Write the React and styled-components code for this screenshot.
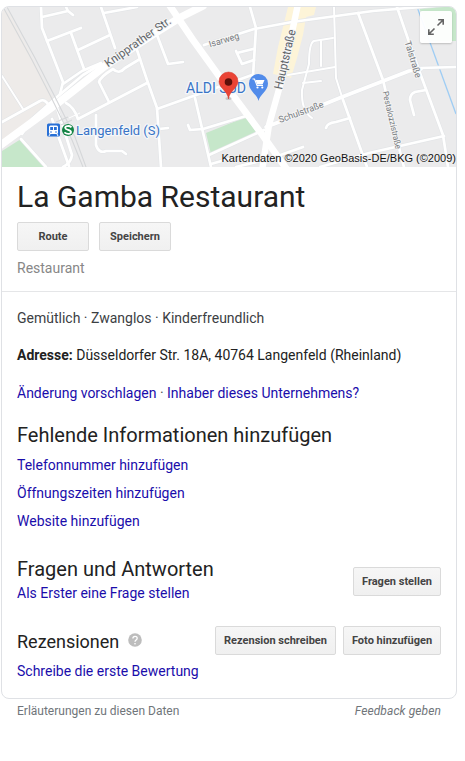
import React from 'react';
import styled, { createGlobalStyle } from 'styled-components';

const GlobalStyle = createGlobalStyle`
  * { box-sizing: border-box; }
  body { margin: 0; background: #fff; font-family: Roboto, "Liberation Sans", sans-serif; color: #222; }
`;

const Page = styled.main`
  width: 465px;
  height: 761px;
  padding: 6px 8px 0 1px;
  overflow: hidden;
`;

const Card = styled.article`
  height: 693px;
  border: 1px solid #dfe1e5;
  border-radius: 8px;
  overflow: hidden;
`;

const MapFrame = styled.div`
  position: relative;
  height: 160px;
`;

const MapDrawing = styled.svg`
  display: block;
  width: 100%;
  height: 160px;
`;

const ExpandButton = styled.button`
  position: absolute;
  top: 4px;
  right: 4px;
  width: 32px;
  height: 32px;
  padding: 0;
  border: 0;
  border-radius: 2px;
  background: rgba(255, 255, 255, 0.94);
  box-shadow: 0 1px 2px rgba(0, 0, 0, 0.2);

  svg { display: block; }
`;

const Header = styled.header`
  height: 125px;
  padding: 10px 15px 0;
  border-bottom: 1px solid #e5e6e8;
`;

const Title = styled.h1`
  margin: 0 0 5px;
  font-size: 30px;
  line-height: 40px;
  font-weight: 400;
  color: #222;
`;

const ButtonRow = styled.div`
  display: flex;
  gap: ${(p) => p.$gap}px;
`;

const Button = styled.button`
  width: ${(p) => p.$width}px;
  height: 29px;
  padding: 0;
  border: 1px solid #dadada;
  border-radius: 2px;
  background: linear-gradient(#f6f6f6, #f0f0f0);
  color: #444;
  font: 700 11px/27px Roboto, sans-serif;
  white-space: nowrap;
`;

const Category = styled.div`
  margin-top: 7px;
  font-size: 14px;
  line-height: 20px;
  color: #878787;
`;

const Body = styled.div`
  padding: 16px 15px 0;
`;

const Line = styled.p`
  margin: 0 0 ${(p) => p.$after || 0}px;
  font-size: 14px;
  line-height: 20px;
  white-space: nowrap;
  color: ${(p) => p.$color || '#222'};
`;

const Link = styled.a`
  color: #1a0dab;
  text-decoration: none;
`;

const Heading = styled.h2`
  margin: 0;
  font-size: ${(p) => p.$size || 20}px;
  line-height: 26px;
  font-weight: 400;
`;

const LinkList = styled.div`
  display: grid;
  gap: 8px;
  margin: 7px 0 25px;
`;

const Section = styled.section`
  display: flex;
  justify-content: space-between;
  align-items: flex-start;
  height: ${(p) => p.$height}px;
`;

const SectionText = styled.div`
  display: grid;
  gap: ${(p) => p.$gap}px;
  padding-top: ${(p) => p.$top || 0}px;
`;

const Actions = styled(ButtonRow)`
  padding-top: ${(p) => p.$top}px;
`;

const HeadingRow = styled.div`
  display: flex;
  align-items: flex-start;
  gap: 9px;

  svg { margin-top: 4px; }
`;

const Footer = styled.footer`
  display: flex;
  justify-content: space-between;
  padding: 4px 16px 0;
  font-size: 12px;
  line-height: 16px;
  color: #70757a;
`;

const Feedback = styled.em`
  letter-spacing: 0.1px;
`;

const minorRoads = [
  'M41 7 L42 28 L63 82 L60 94',
  'M42 17 L68 11 L66 7 M68 11 L73 15',
  'M47 41 L81 28',
  'M71 33 L84 69',
  'M101 7 L115 48',
  'M78 50 L110 35',
  'M104 13 L137 7',
  'M137 50 L147 80 L157 108 L161 167',
  'M2 122 L40 101 Q45 98 50 107',
  'M22 134 L32 119 L57 97 L83 75 L101 64',
  'M63 84 L82 71 L101 63',
  'M66 103 Q74 107 78 119',
  'M78 119 L147 83',
  'M109 102 L99 82 Q100 77 113 69 Q119 75 125 68 L140 59',
  'M96 115 L96 145 Q99 154 106 151 L122 151 L126 154',
  'M21 139 L46 167',
  'M57 108 L72 155 Q71 163 63 167',
  'M52 119 L69 166',
  'M157 109 L252 75',
  'M159 129 L168 128',
  'M195 98 L211 167',
  'M188 125 L190 130 L203 129 L246 116',
  'M157 35 L168 64 L183 62',
  'M250 7 L256 28 L253 76',
  'M204 45 L254 29 L292 22 L373 11 L456 4',
  'M236 51 L242 64 L254 60 M237 53 L253 49',
  'M209 155 L264 130 M211 164 L232 158',
  'M236 167 L272 158 L303 147',
  'M358 13 L383 80 L402 160 L404 167',
  'M397 7 L408 39 L420 73 L443 135 L448 167',
  'M420 68 L456 67',
  'M426 90 L415 92 Q410 94 410 100 L414 115',
  'M326 128 Q327 123 336 122 L350 118',
  'M320 167 L369 153 L444 136',
  'M342 97 L367 167',
];

const lanes = [
  'M2 76 L23 109',
  'M334 7 L336 78 L342 97',
  'M312 118 Q301 111 302 90 L309 64 Q309 43 314 41 L333 38',
  'M321 41 L321 66',
  'M288 75 L335 67',
  'M303 83 L321 81',
];

const schoolRoad = 'M266 127 L300 114 L342 97 L409 71 L421 69';

function Roads() {
  return (
    <g fill="none" strokeLinecap="round" strokeLinejoin="round">
      {minorRoads.map((d) => <path key={`edge${d}`} d={d} stroke="#e4e6e8" strokeWidth="4" />)}
      {lanes.map((d) => <path key={`edge${d}`} d={d} stroke="#e1e3e6" strokeWidth="3.2" />)}
      <path d={schoolRoad} stroke="#e3e5e8" strokeWidth="4.8" />
      {minorRoads.map((d) => <path key={d} d={d} stroke="#fff" strokeWidth="2.7" />)}
      {lanes.map((d) => <path key={d} d={d} stroke="#fff" strokeWidth="2" />)}
      <path d={schoolRoad} stroke="#fff" strokeWidth="3.6" />
      <path d="M-2 147 L58 103 L105 66 L152 35 L181 17 L203 6" stroke="#fff" strokeWidth="7.5" />
      <path d="M168 3 L193 40 L232 94 L261 133 L288 171" stroke="#fff" strokeWidth="6.8" />
      <path d="M298 4 L283 75 L269 125 L262 171" stroke="#fff" strokeWidth="6.4" />
    </g>
  );
}

function MapView() {
  return (
    <MapDrawing viewBox="2 7 454 160" preserveAspectRatio="none" fontFamily="Roboto, sans-serif">
      <rect x="2" y="7" width="454" height="160" fill="#ebebec" />
      <path d="M2 7 L10 14 L46 84 L57 105 L2 145Z" fill="#eeebe9" />
      <path d="M2 151 L21 139 L45 167 L2 167Z" fill="#c6e7ca" />
      <path d="M206 133 L246 117 L256 132 L211 154Z" fill="#c6e7ca" />
      <path d="M419 7 H456 V41 H431Z" fill="#c6e7ca" />
      <path d="M288 7 H316 L314 15 L306 17 L303 35 L297 58 L291 78 L273 74 L278 47Z" fill="#fdf4d8" />
      <path d="M416 4 L456 114" fill="none" stroke="#9fcdf4" strokeWidth="1.3" />
      <Roads />
      <g fill="none" stroke="#d5d7d9" strokeWidth="1.1">
        <path d="M3 7 L32 60 L51 97 L72 140 L83 167" />
        <path d="M7 7 L35 58 L54 95 L75 137 L86 167" />
        <path d="M56 122 L68 117 M61 125 L72 120" />
      </g>
      <path d="M69 118 L80 113 M73 108 L77 118" stroke="#fff" strokeWidth="1" />
      <g fill="#5f6468" stroke="#f4f4f4" strokeWidth="2" paintOrder="stroke" strokeLinejoin="round">
        <text transform="translate(108 67.5) rotate(-35)" fontSize="11.5" textLength="78" lengthAdjust="spacingAndGlyphs">Knipprather Str.</text>
        <text transform="translate(282 90) rotate(-77)" fontSize="12" textLength="61" lengthAdjust="spacingAndGlyphs">Hauptstraße</text>
        <g fill="#777b80">
          <text transform="translate(210 47.5) rotate(-17)" fontSize="9.2" textLength="31" lengthAdjust="spacingAndGlyphs">Isarweg</text>
          <text transform="translate(280 123) rotate(-20)" fontSize="9.2" textLength="47" lengthAdjust="spacingAndGlyphs">Schulstraße</text>
          <text transform="translate(404.5 42) rotate(73)" fontSize="9" textLength="38" lengthAdjust="spacingAndGlyphs">Talstraße</text>
          <text transform="translate(382.5 92) rotate(77)" fontSize="8.5" textLength="59" lengthAdjust="spacingAndGlyphs">Pestalozzistraße</text>
        </g>
      </g>
      <g fill="#3974c6" stroke="#f5f7fa" strokeWidth="2.5" paintOrder="stroke" strokeLinejoin="round" fontSize="13">
        <text x="76" y="135" textLength="84" lengthAdjust="spacingAndGlyphs">Langenfeld (S)</text>
        <text x="186" y="93" fontSize="14" textLength="60" lengthAdjust="spacingAndGlyphs">ALDI SÜD</text>
      </g>
      <rect x="47" y="123.5" width="13" height="13" rx="1.5" fill="#2870d6" />
      <path d="M50.5 125.5 H56.5 Q58 125.5 58 127 V132.5 Q58 134 56.5 134 H50.5 Q49 134 49 132.5 V127 Q49 125.5 50.5 125.5Z" fill="#fff" />
      <path d="M50.2 127 H53 V130 H50.2Z M54 127 H56.8 V130 H54Z" fill="#2870d6" />
      <circle cx="51" cy="132" r=".8" fill="#2870d6" />
      <circle cx="56" cy="132" r=".8" fill="#2870d6" />
      <path d="M50 134 L49 136 M57 134 L58 136" stroke="#fff" />
      <circle cx="68" cy="130" r="6" fill="#138444" />
      <path d="M71.5 127.2 C69 125.3 65 125.8 65.2 128 C65.4 130.3 71 129.5 71 132 C71 134.3 67 134.5 64.4 132.4" fill="none" stroke="#fff" strokeWidth="1.8" />
      <path d="M258.5 101 C257.5 95 249 91 249 83.5 A9.5 9.5 0 0 1 268 83.5 C268 91 259.5 95 258.5 101Z" fill="#518bea" />
      <path d="M252.5 79 H254.5 L257 85.5 H263" fill="none" stroke="#fff" strokeWidth="1.1" />
      <path d="M255.5 80 H264.5 L262.5 84.5 H257.2Z" fill="#fff" />
      <circle cx="257.5" cy="87.5" r="1.1" fill="#fff" />
      <circle cx="262.3" cy="87.5" r="1.1" fill="#fff" />
      <ellipse cx="228.5" cy="98.5" rx="3" ry="1.5" fill="#888" opacity=".35" />
      <path d="M228.5 99 C227.8 91 219 88 219 81.5 A9.5 9.5 0 0 1 238 81.5 C238 88 229.2 91 228.5 99Z" fill="#ea4335" stroke="#d33428" strokeWidth=".5" />
      <circle cx="228.5" cy="82" r="3.8" fill="#5e100a" />
      <text x="221.5" y="162" fontFamily="Liberation Sans, Arial, sans-serif" fontSize="11" fill="#111" stroke="#f2f2f2" strokeWidth="1" paintOrder="stroke" textLength="234.5">Kartendaten ©2020 GeoBasis-DE/BKG (©2009)</text>
    </MapDrawing>
  );
}

function ExpandIcon() {
  return (
    <svg width="32" height="32" viewBox="0 0 32 32" fill="none" stroke="#646464" strokeWidth="1.6">
      <path d="M17.5 14.5 L23.3 8.7 M18.2 8.8 H23.2 V13.8 M14.5 17.5 L8.7 23.3 M8.8 18.2 V23.2 H13.8" />
    </svg>
  );
}

function HelpIcon() {
  return (
    <svg width="14" height="14" viewBox="0 0 14 14">
      <circle cx="7" cy="7" r="6.8" fill="#bdbdbd" />
      <path d="M4.9 5.5 C4.9 2.6 9.2 2.7 9.2 5.3 C9.2 7 7 7 7 8.7" fill="none" stroke="#fff" strokeWidth="1.3" />
      <rect x="6.3" y="10" width="1.4" height="1.4" fill="#fff" />
    </svg>
  );
}

export default function App() {
  return (
    <>
      <GlobalStyle />
      <Page>
        <Card>
          <MapFrame>
            <MapView />
            <ExpandButton aria-label="Karte maximieren"><ExpandIcon /></ExpandButton>
          </MapFrame>
          <Header>
            <Title>La Gamba Restaurant</Title>
            <ButtonRow $gap={10}>
              <Button $width={72}>Route</Button>
              <Button $width={72}>Speichern</Button>
            </ButtonRow>
            <Category>Restaurant</Category>
          </Header>
          <Body>
            <Line $after={17} $color="#3c4043">Gemütlich · Zwanglos · Kinderfreundlich</Line>
            <Line $after={18}><b>Adresse:</b> Düsseldorfer Str. 18A, 40764 Langenfeld (Rheinland)</Line>
            <Line $after={19} $color="#4d5156"><Link>Änderung vorschlagen</Link> · <Link>Inhaber dieses Unternehmens?</Link></Line>
            <Heading>Fehlende Informationen hinzufügen</Heading>
            <LinkList>
              <Line><Link>Telefonnummer hinzufügen</Link></Line>
              <Line><Link>Öffnungszeiten hinzufügen</Link></Line>
              <Line><Link>Website hinzufügen</Link></Line>
            </LinkList>
            <Section $height={70}>
              <SectionText $gap={1}>
                <Heading>Fragen und Antworten</Heading>
                <Line><Link>Als Erster eine Frage stellen</Link></Line>
              </SectionText>
              <Actions $top={11}><Button $width={88}>Fragen stellen</Button></Actions>
            </Section>
            <Section $height={60}>
              <SectionText $gap={6} $top={3}>
                <HeadingRow><Heading $size={18}>Rezensionen</Heading><HelpIcon /></HeadingRow>
                <Line><Link>Schreibe die erste Bewertung</Link></Line>
              </SectionText>
              <Actions $top={0} $gap={7}>
                <Button $width={121}>Rezension schreiben</Button>
                <Button $width={98}>Foto hinzufügen</Button>
              </Actions>
            </Section>
          </Body>
        </Card>
        <Footer><span>Erläuterungen zu diesen Daten</span><Feedback>Feedback geben</Feedback></Footer>
      </Page>
    </>
  );
}
